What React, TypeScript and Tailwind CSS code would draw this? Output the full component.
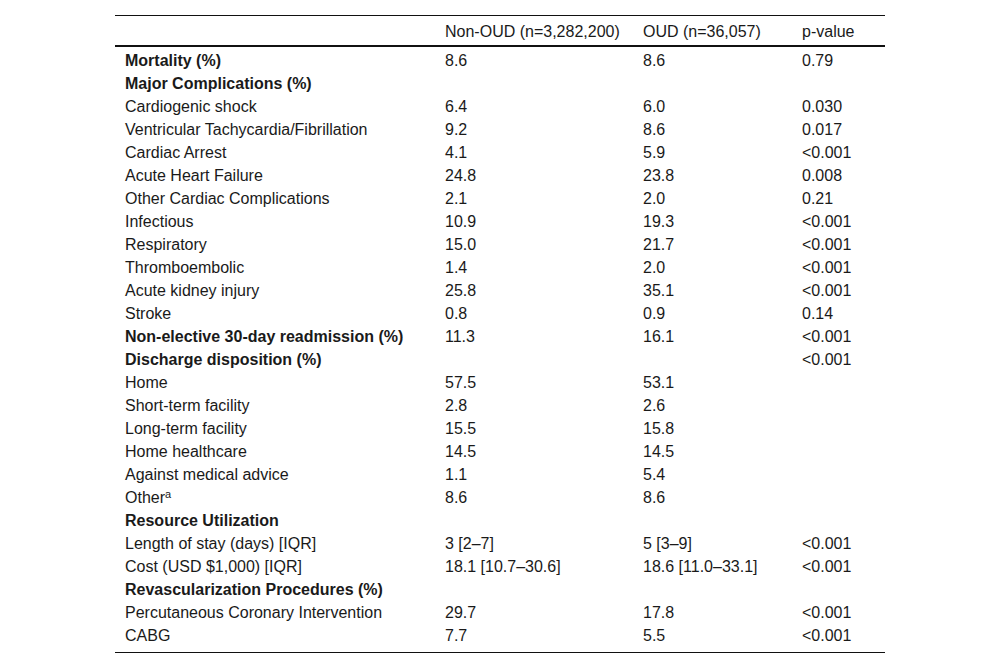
type Row = { label: string; a?: string; b?: string; p?: string; bold?: boolean; sup?: string };

const rows: Row[] = [
  { label: 'Mortality (%)', a: '8.6', b: '8.6', p: '0.79', bold: true },
  { label: 'Major Complications (%)', bold: true },
  { label: 'Cardiogenic shock', a: '6.4', b: '6.0', p: '0.030' },
  { label: 'Ventricular Tachycardia/Fibrillation', a: '9.2', b: '8.6', p: '0.017' },
  { label: 'Cardiac Arrest', a: '4.1', b: '5.9', p: '<0.001' },
  { label: 'Acute Heart Failure', a: '24.8', b: '23.8', p: '0.008' },
  { label: 'Other Cardiac Complications', a: '2.1', b: '2.0', p: '0.21' },
  { label: 'Infectious', a: '10.9', b: '19.3', p: '<0.001' },
  { label: 'Respiratory', a: '15.0', b: '21.7', p: '<0.001' },
  { label: 'Thromboembolic', a: '1.4', b: '2.0', p: '<0.001' },
  { label: 'Acute kidney injury', a: '25.8', b: '35.1', p: '<0.001' },
  { label: 'Stroke', a: '0.8', b: '0.9', p: '0.14' },
  { label: 'Non-elective 30-day readmission (%)', a: '11.3', b: '16.1', p: '<0.001', bold: true },
  { label: 'Discharge disposition (%)', p: '<0.001', bold: true },
  { label: 'Home', a: '57.5', b: '53.1' },
  { label: 'Short-term facility', a: '2.8', b: '2.6' },
  { label: 'Long-term facility', a: '15.5', b: '15.8' },
  { label: 'Home healthcare', a: '14.5', b: '14.5' },
  { label: 'Against medical advice', a: '1.1', b: '5.4' },
  { label: 'Other', sup: 'a', a: '8.6', b: '8.6' },
  { label: 'Resource Utilization', bold: true },
  { label: 'Length of stay (days) [IQR]', a: '3 [2\u20137]', b: '5 [3\u20139]', p: '<0.001' },
  { label: 'Cost (USD $1,000) [IQR]', a: '18.1 [10.7\u201330.6]', b: '18.6 [11.0\u201333.1]', p: '<0.001' },
  { label: 'Revascularization Procedures (%)', bold: true },
  { label: 'Percutaneous Coronary Intervention', a: '29.7', b: '17.8', p: '<0.001' },
  { label: 'CABG', a: '7.7', b: '5.5', p: '<0.001' },
];

const grid = 'grid grid-cols-[320px_198px_159px_93px]';

export default function App() {
  return (
    <div className="w-[1000px] h-[668px] bg-white pt-[15px] text-[16px] leading-[23px] text-[#1a1a1a]" style={{ fontFamily: '"Liberation Sans", Arial, sans-serif' }}>
      <div className="ml-[115px] w-[770px] border-t border-b border-[#111] pb-[5px]">
        <div className={`${grid} h-[31px] pt-[2px] items-center border-b-2 border-[#111]`}>
          <div className="pl-[10px]" />
          <div className="pl-[10px]">Non-OUD (n=3,282,200)</div>
          <div className="pl-[10px]">OUD (n=36,057)</div>
          <div className="pl-[10px]">p-value</div>
        </div>
        <div className="pt-[2px]">
          {rows.map((r, i) => (
            <div key={i} className={`${grid} h-[23px] items-center`}>
              <div className={`pl-[10px] whitespace-nowrap ${r.bold ? 'font-bold' : ''}`}>
                {r.label}
                {r.sup && <span className="text-[11px] align-[5px] leading-none">{r.sup}</span>}
              </div>
              <div className="pl-[10px] whitespace-nowrap">{r.a}</div>
              <div className="pl-[10px] whitespace-nowrap">{r.b}</div>
              <div className="pl-[10px] whitespace-nowrap">{r.p}</div>
            </div>
          ))}
        </div>
      </div>
    </div>
  );
}
